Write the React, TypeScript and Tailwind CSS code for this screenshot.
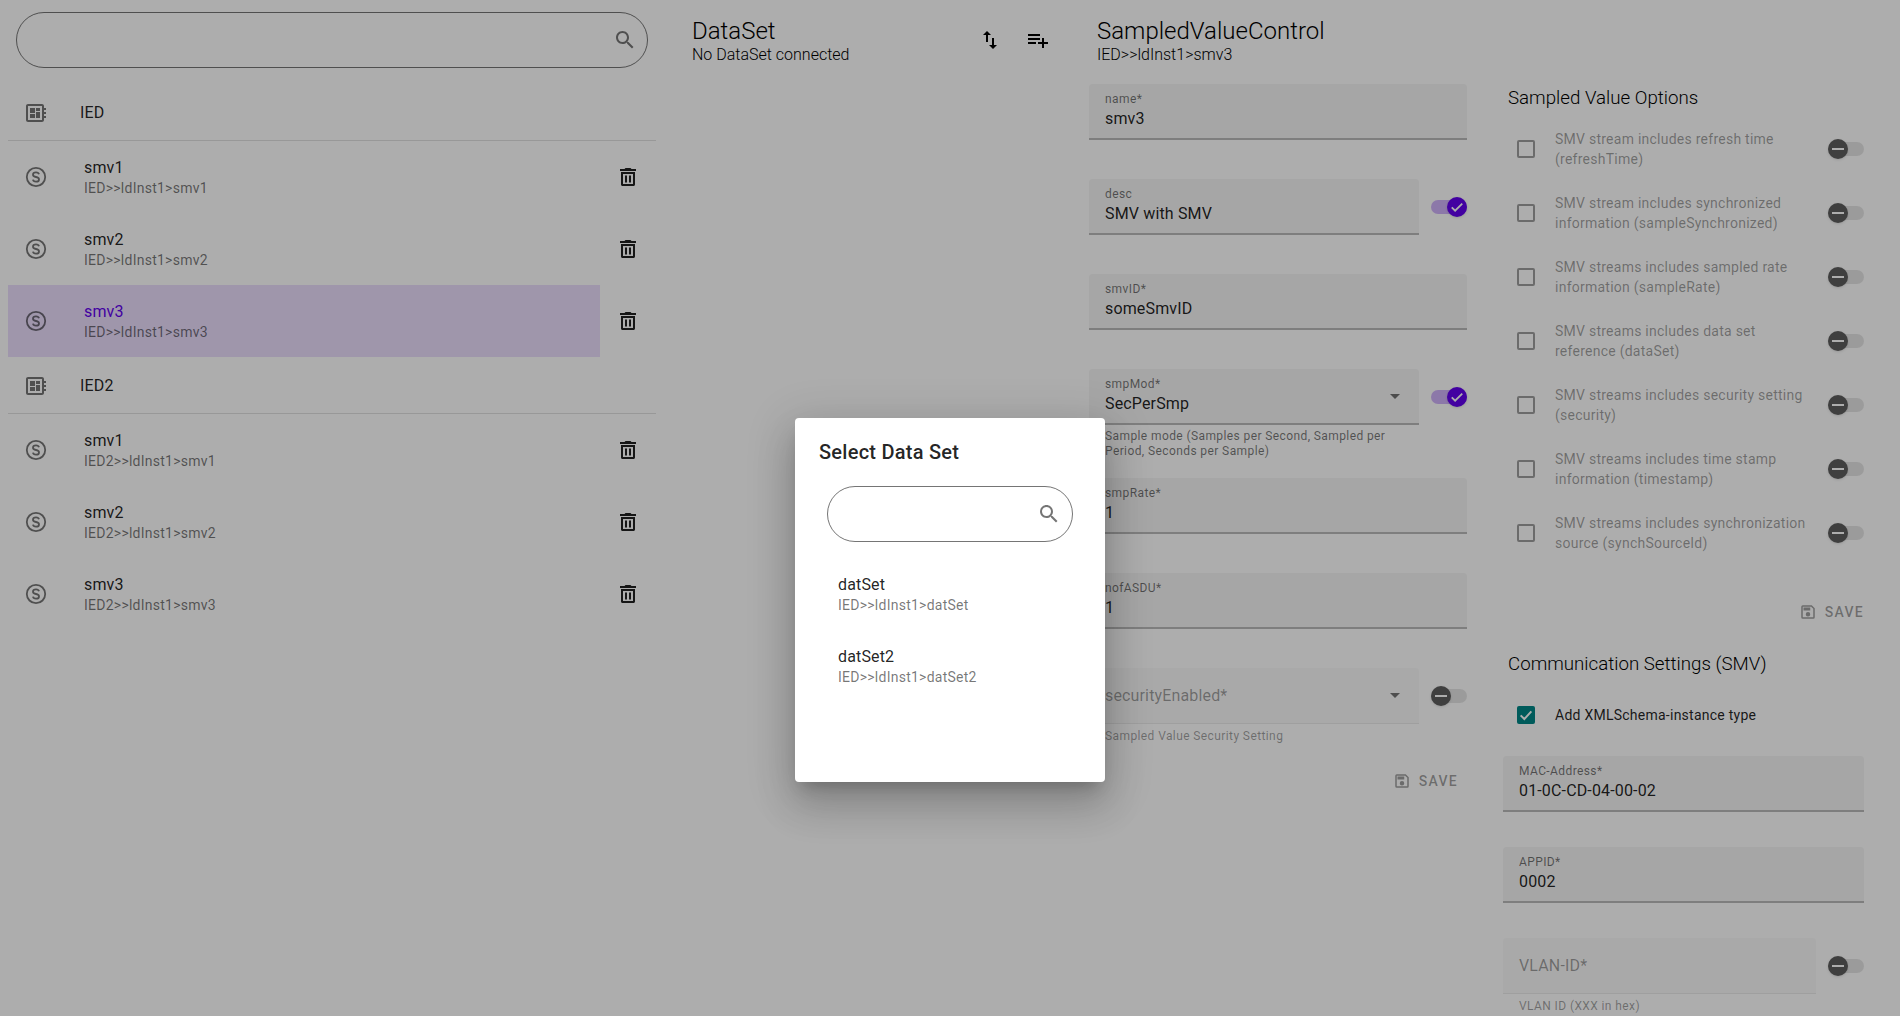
const P = {
  search: "M15.5 14h-.79l-.28-.27C15.41 12.59 16 11.11 16 9.5 16 5.91 13.09 3 9.5 3S3 5.91 3 9.5 5.91 16 9.5 16c1.61 0 3.09-.59 4.23-1.57l.27.28v.79l5 4.99L20.49 19l-4.99-5zm-6 0C7.01 14 5 11.99 5 9.5S7.01 5 9.5 5 14 7.01 14 9.5 11.99 14 9.5 14z",
  board: "M22 9V7h-2V5c0-1.1-.9-2-2-2H4c-1.1 0-2 .9-2 2v14c0 1.1.9 2 2 2h14c1.1 0 2-.9 2-2v-2h2v-2h-2v-2h2v-2h-2V9h2zm-4 10H4V5h14v14zM6 13h5v4H6zm6-6h4v3h-4zM6 7h5v5H6zm6 4h4v6h-4z",
  trash: "M5 19.500C5 20.300 5.700 21 6.500 21h11c.8 0 1.500-.7 1.500-1.500V7H5v12.500zM7 9h10v10H7V9zm8.500-5l-1-1h-5l-1 1H4v2h16V4h-4.500zM9 10.500h2v7H9zm4 0h2v7h-2z",
  swap: "M16 17.01V10h-2v7.01h-3L15 21l4-3.99h-3zM9 3L5 6.99h3V14h2V6.99h3L9 3z",
  add: "M14 10H2v2h12v-2zm0-4H2v2h12V6zm4 8v-4h-2v4h-4v2h4v4h2v-4h4v-2h-4zM2 16h8v-2H2v2z",
  save: "M17 3H5a2 2 0 0 0-2 2v14a2 2 0 0 0 2 2h14a2 2 0 0 0 2-2V7l-4-4zm2 16H5V5h11.17L19 7.83V19zm-7-7a3 3 0 1 0 0 6 3 3 0 0 0 0-6zM6 6h9v4H6z",
  arrow: "M7 10l5 5 5-5z",
};

function Icon({ d, className }: { d: string; className: string }) {
  return (
    <svg viewBox="0 0 24 24" className={className} fill="currentColor" fillRule="evenodd">
      <path d={d} />
    </svg>
  );
}

function SmvIcon() {
  return (
    <svg viewBox="0 0 24 24" className="h-6 w-6 shrink-0 text-black/54" fill="none" stroke="currentColor">
      <circle cx="12" cy="12" r="9.2" strokeWidth="1.8" />
      <path d="M15 9.3c-.3-1.2-1.4-1.9-3-1.9-1.7 0-3 .9-3 2.3s1.2 2 3 2.3 3 1 3 2.4-1.300 2.300-3 2.300c-1.700 0-2.800-.8-3-2" strokeWidth="1.8" />
    </svg>
  );
}

function Row({ name, path, selected }: { name: string; path: string; selected?: boolean }) {
  return (
    <div className="flex items-center">
      <div className={`flex h-[72px] w-[592px] items-center pl-4 ${selected ? "bg-[#eadefd]" : ""}`}>
        <SmvIcon />
        <div className="ml-9 pt-[2px]">
          <div className={`text-base leading-[20px] tracking-[0.15px] ${selected ? "text-[#6200ee]" : "text-black/87"}`}>{name}</div>
          <div className="text-sm leading-[20px] tracking-[0.25px] text-black/54">{path}</div>
        </div>
      </div>
      <Icon d={P.trash} className="ml-4 h-6 w-6 text-black/87" />
    </div>
  );
}

function Header({ name }: { name: string }) {
  return (
    <div className="flex h-[57px] items-center border-b border-black/12 pl-4 pt-[1px]">
      <Icon d={P.board} className="h-6 w-6 text-black/54" />
      <span className="ml-8 text-base tracking-[0.15px] text-black/87">{name}</span>
    </div>
  );
}

function Switch({ on }: { on?: boolean }) {
  return (
    <div className="relative h-5 w-9 shrink-0">
      <div className={`absolute left-0 top-[3px] h-[14px] w-9 rounded-full ${on ? "bg-[#6200ee]/30" : "bg-black/10"}`} />
      <div className={`absolute top-0 flex h-5 w-5 items-center justify-center rounded-full shadow-sm ${on ? "right-0 bg-[#6200ee]" : "left-0 bg-[#5e5e5e]"}`}>
        {on ? (
          <svg viewBox="0 0 24 24" className="h-[18px] w-[18px]" fill="none" stroke="white" strokeWidth="2.4">
            <path d="M5 12.500l4.500 4.500L19 7.500" />
          </svg>
        ) : (
          <div className="h-[2px] w-3 bg-white" />
        )}
      </div>
    </div>
  );
}

function Field({ label, value, select, className }: { label: string; value: string; select?: boolean; className?: string }) {
  return (
    <div className={`relative h-14 grow rounded-t bg-[#f5f5f5] border-b-2 border-black/24 px-4 ${className ?? ""}`}>
      <div className="pt-[8px] text-xs leading-[14px] tracking-[0.4px] text-black/54">{label}</div>
      <div className="mt-[1px] text-base leading-[24px] tracking-[0.15px] text-black/87">{value}</div>
      {select && <Icon d={P.arrow} className="absolute right-[12px] top-[15px] h-6 w-6 text-black/54" />}
    </div>
  );
}

function DisabledField({ label, select }: { label: string; select?: boolean }) {
  return (
    <div className="relative flex h-14 grow items-center rounded-t border-b border-black/6 bg-[#fafafa] px-4 text-base tracking-[0.15px] text-black/38">
      {label}
      {select && <Icon d={P.arrow} className="absolute right-[12px] top-[15px] h-6 w-6 text-black/54" />}
    </div>
  );
}

function SaveButton({ className }: { className: string }) {
  return (
    <div className={`flex items-center justify-end text-black/38 ${className}`}>
      <Icon d={P.save} className="h-[18px] w-[18px]" />
      <span className="ml-2 text-sm font-medium tracking-[1.25px]">SAVE</span>
    </div>
  );
}

function Option({ text }: { text: string }) {
  return (
    <div className="flex h-16 items-center pl-[14px]">
      <div className="h-[18px] w-[18px] shrink-0 rounded-[2px] border-2 border-black/38" />
      <div className="ml-5 w-[262px] text-sm leading-[20px] tracking-[0.25px] text-black/38">{text}</div>
      <div className="ml-auto">
        <Switch />
      </div>
    </div>
  );
}

function SearchBox({ className, iconPad }: { className: string; iconPad: string }) {
  return (
    <div className={`flex h-14 items-center justify-end rounded-[28px] border border-black/54 ${iconPad} ${className}`}>
      <Icon d={P.search} className="h-6 w-6 text-black/54" />
    </div>
  );
}

const options = [
  "SMV stream includes refresh time (refreshTime)",
  "SMV stream includes synchronized information (sampleSynchronized)",
  "SMV streams includes sampled rate information (sampleRate)",
  "SMV streams includes data set reference (dataSet)",
  "SMV streams includes security setting (security)",
  "SMV streams includes time stamp information (timestamp)",
  "SMV streams includes synchronization source (synchSourceId)",
];

export default function App() {
  return (
    <div className="relative flex h-screen w-full overflow-hidden bg-white font-[Roboto,sans-serif]">
      {/* Left list */}
      <div className="w-[664px] shrink-0 pl-2 pr-2 pt-3">
        <SearchBox className="ml-2 mr-2" iconPad="pr-[10px]" />
        <div className="mt-4">
          <Header name="IED" />
          <Row name="smv1" path="IED>>ldInst1>smv1" />
          <Row name="smv2" path="IED>>ldInst1>smv2" />
          <Row name="smv3" path="IED>>ldInst1>smv3" selected />
          <Header name="IED2" />
          <Row name="smv1" path="IED2>>ldInst1>smv1" />
          <Row name="smv2" path="IED2>>ldInst1>smv2" />
          <Row name="smv3" path="IED2>>ldInst1>smv3" />
        </div>
      </div>

      {/* DataSet */}
      <div className="flex w-[425px] shrink-0 items-start justify-between pl-7 pr-[27px]">
        <div className="pt-[18px]">
          <div className="text-2xl font-light leading-[27px] text-black">DataSet</div>
          <div className="text-base font-light leading-[20px] text-black">No DataSet connected</div>
        </div>
        <div className="mt-4 flex">
          <div className="flex h-12 w-12 items-center justify-center"><Icon d={P.swap} className="h-6 w-6 text-black" /></div>
          <div className="flex h-12 w-12 items-center justify-center"><Icon d={P.add} className="h-6 w-6 text-black" /></div>
        </div>
      </div>

      {/* SampledValueControl */}
      <div className="w-[378px] shrink-0">
        <div className="pl-2 pt-[18px]">
          <div className="text-2xl font-light leading-[27px] text-black">SampledValueControl</div>
          <div className="text-base font-light leading-[20px] text-black">IED&gt;&gt;ldInst1&gt;smv3</div>
        </div>
        <div className="mt-[19px] flex flex-col">
          <Field label="name*" value="smv3" />
          <div className="mt-[39px] flex items-center gap-3">
            <Field label="desc" value="SMV with SMV" />
            <Switch on />
          </div>
          <Field label="smvID*" value="someSmvID" className="mt-[39px] grow-0" />
          <div className="mt-[39px] flex items-center gap-3">
            <Field label="smpMod*" value="SecPerSmp" select />
            <Switch on />
          </div>
          <div className="mt-1 w-[320px] pl-4 text-xs leading-[15px] tracking-[0.4px] text-black/54">
            Sample mode (Samples per Second, Sampled per Period, Seconds per Sample)
          </div>
          <Field label="smpRate*" value="1" className="mt-[19px] grow-0" />
          <Field label="nofASDU*" value="1" className="mt-[39px] grow-0" />
          <div className="mt-[39px] flex items-center gap-3">
            <DisabledField label="securityEnabled*" select />
            <Switch />
          </div>
          <div className="mt-1 pl-4 text-xs leading-[16px] tracking-[0.4px] text-black/38">Sampled Value Security Setting</div>
          <SaveButton className="mt-[27px] pr-[9px]" />
        </div>
      </div>

      {/* Options */}
      <div className="ml-9 w-[361px] shrink-0">
        <div className="pl-[5px] pt-[86px] text-[18.72px] font-light leading-[24px] text-black">Sampled Value Options</div>
        <div className="mt-[7px]">
          {options.map((o) => (
            <Option key={o} text={o} />
          ))}
        </div>
        <SaveButton className="mt-[37px]" />
        <div className="mt-[30px] pl-[5px] text-[18.72px] font-light leading-[24px] text-black">Communication Settings (SMV)</div>
        <div className="mt-[29px] flex items-center pl-[14px]">
          <div className="flex h-[18px] w-[18px] items-center justify-center rounded-[2px] bg-[#018786]">
            <svg viewBox="0 0 24 24" className="h-4 w-4" fill="none" stroke="white" strokeWidth="3">
              <path d="M4 12.500l5.500 5.500L20 6.500" />
            </svg>
          </div>
          <span className="ml-5 text-sm leading-[20px] tracking-[0.25px] text-black/87">Add XMLSchema-instance type</span>
        </div>
        <Field label="MAC-Address*" value="01-0C-CD-04-00-02" className="mt-[31px] grow-0" />
        <Field label="APPID*" value="0002" className="mt-[35px] grow-0" />
        <div className="mt-[35px] flex items-center gap-3">
          <DisabledField label="VLAN-ID*" />
          <Switch />
        </div>
        <div className="mt-1 pl-4 text-xs leading-[16px] tracking-[0.4px] text-black/38">VLAN ID (XXX in hex)</div>
      </div>

      {/* Scrim */}
      <div className="absolute inset-0 bg-black/32" />

      {/* Dialog */}
      <div className="absolute left-[795px] top-[418px] h-[364px] w-[310px] rounded bg-white pt-[20px] shadow-[0_11px_15px_-7px_rgba(0,0,0,0.2),0_24px_38px_3px_rgba(0,0,0,0.14),0_9px_46px_8px_rgba(0,0,0,0.12)]">
        <div className="pl-6 text-xl font-medium leading-[28px] tracking-[0.25px] text-black/87">Select Data Set</div>
        <SearchBox className="ml-8 mr-8 mt-5" iconPad="pr-[11px]" />
        <div className="mt-[17px]">
          {[["datSet", "IED>>ldInst1>datSet"], ["datSet2", "IED>>ldInst1>datSet2"]].map(([a, b]) => (
            <div key={a} className="flex h-[72px] flex-col justify-center pl-[43px]">
              <div className="text-base leading-[20px] tracking-[0.15px] text-black/87">{a}</div>
              <div className="text-sm leading-[20px] tracking-[0.25px] text-black/54">{b}</div>
            </div>
          ))}
        </div>
      </div>
    </div>
  );
}
